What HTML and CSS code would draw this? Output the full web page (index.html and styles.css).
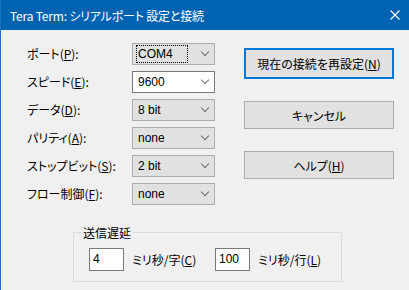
FILE: index.html
```html
<!DOCTYPE html>
<html lang="ja">
<head>
    <meta charset="UTF-8">
    <title>Tera Term: シリアルポート 設定と接続</title>
    <link rel="stylesheet" href="styles.css">
</head>
<body>
    <div class="window">
        <div class="titlebar">
            <div class="title">Tera Term: シリアルポート 設定と接続</div>
            <svg class="close" width="10" height="10" viewBox="0 0 10 10">
                <path d="M0.5 0.5 L9.5 9.5 M9.5 0.5 L0.5 9.5" stroke="#fff" stroke-width="1.1" fill="none"/>
            </svg>
        </div>
        <div class="client">
            <div class="top">
                <div class="fields">
                    <div class="label">ポート(<u>P</u>):</div>
                    <div class="combo focus"><span class="value">COM4</span><span class="arrow"></span></div>
                    <div class="label">スピード(<u>E</u>):</div>
                    <div class="combo edit"><span class="value">9600</span><span class="arrow"></span></div>
                    <div class="label">データ(<u>D</u>):</div>
                    <div class="combo"><span class="value">8 bit</span><span class="arrow"></span></div>
                    <div class="label">パリティ(<u>A</u>):</div>
                    <div class="combo"><span class="value">none</span><span class="arrow"></span></div>
                    <div class="label">ストップビット(<u>S</u>):</div>
                    <div class="combo"><span class="value">2 bit</span><span class="arrow"></span></div>
                    <div class="label">フロー制御(<u>F</u>):</div>
                    <div class="combo"><span class="value">none</span><span class="arrow"></span></div>
                </div>
                <div class="buttons">
                    <button class="button default">現在の接続を再設定(<u>N</u>)</button>
                    <button class="button">キャンセル</button>
                    <button class="button">ヘルプ(<u>H</u>)</button>
                </div>
            </div>
            <fieldset class="group">
                <legend>送信遅延</legend>
                <div class="delay">
                    <div class="textbox">4</div>
                    <div class="unit">ミリ秒/字(<u>C</u>)</div>
                    <div class="textbox">100</div>
                    <div class="unit">ミリ秒/行(<u>L</u>)</div>
                </div>
            </fieldset>
        </div>
    </div>
</body>
</html>
```

FILE: styles.css
```css
body {
    margin: 0;
    width: 409px;
    height: 290px;
    overflow: hidden;
    background: #f0f0f0;
    font-family: "Noto Sans CJK JP", "Liberation Sans", sans-serif;
    font-size: 12px;
    color: #000;
    font-feature-settings: "palt";
}
.window {
    height: 290px;
    border-left: 1px solid #1a6fc0;
    box-sizing: border-box;
}
.titlebar {
    height: 30px;
    background: #0063b1;
    color: #fff;
    display: flex;
    align-items: center;
    justify-content: space-between;
    padding: 0 9px 0 9px;
}
.title {
    font-size: 12px;
    letter-spacing: -0.2px;
}
.client {
    padding: 13px 0 0 26px;
}
.top {
    display: flex;
}
.fields {
    display: grid;
    grid-template-columns: 105px 83px;
    row-gap: 6px;
}
.label {
    height: 22px;
    line-height: 22px;
    white-space: nowrap;
}
.combo {
    height: 22px;
    box-sizing: border-box;
    border: 1px solid #adadad;
    background: #e1e1e1;
    display: flex;
    align-items: center;
    justify-content: space-between;
    padding: 0 6px 0 3px;
    font-family: "Liberation Sans", sans-serif;
}
.combo.edit {
    background: #fff;
    border-color: #7a7a7a;
}
.value {
    padding: 0 1px;
    line-height: 16px;
    border: 1px dotted transparent;
}
.focus .value {
    border-color: #000;
    padding-right: 14px;
}
.arrow {
    width: 5px;
    height: 5px;
    border-right: 1px solid #707070;
    border-bottom: 1px solid #707070;
    transform: rotate(45deg);
    margin-top: -4px;
}
.buttons {
    display: flex;
    flex-direction: column;
    gap: 22px;
    margin: 5px 0 0 29px;
}
.button {
    width: 150px;
    height: 28px;
    border: 1px solid #adadad;
    background: #e1e1e1;
    font-family: "Noto Sans CJK JP", sans-serif;
    font-size: 12px;
    font-feature-settings: "palt";
    color: #000;
    padding: 0;
}
.button.default {
    height: 31px;
    border: 2px solid #0078d7;
}
.group {
    width: 265px;
    box-sizing: border-box;
    margin: 19px 0 0 46px;
    padding: 7px 0 11px 15px;
    border: 1px solid #dcdcdc;
    height: 58px;
}
.group legend {
    padding: 0 2px;
    margin-left: -8px;
}
.delay {
    display: flex;
    align-items: center;
}
.textbox {
    width: 35px;
    height: 23px;
    box-sizing: border-box;
    border: 1px solid #7a7a7a;
    background: #fff;
    padding-left: 3px;
    line-height: 21px;
    font-family: "Liberation Sans", sans-serif;
}
.unit {
    margin: 0 8px;
    width: 75px;
    white-space: nowrap;
}
```
